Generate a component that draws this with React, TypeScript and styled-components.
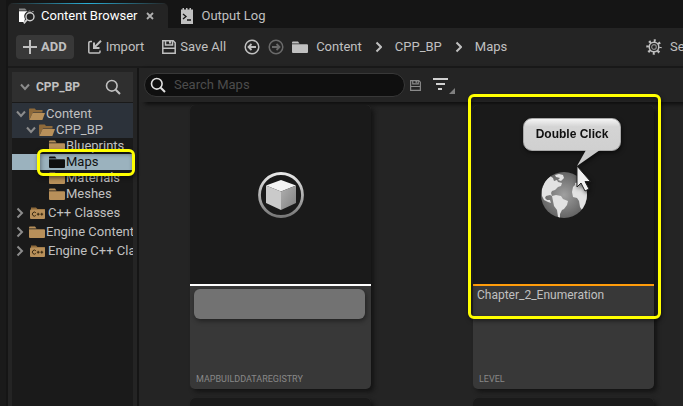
import React from "react";
import styled, { createGlobalStyle } from "styled-components";

const GlobalStyle = createGlobalStyle`
  * { box-sizing: border-box; }
  body { margin: 0; background: #1a1a1a; }
  button, input { font: inherit; color: inherit; border: 0; padding: 0; margin: 0; background: none; }
  button { cursor: pointer; text-align: left; }
  ul { list-style: none; margin: 0; padding: 0; }
  svg { display: block; flex: none; }
`;

const Shell = styled.div`
  display: flex;
  flex-direction: column;
  height: 100vh;
  overflow: hidden;
  border-left: 6px solid #1a1a1a;
  padding-left: 2px;
  background: #151515;
  color: #c0c0c0;
  font: 13px/16px Roboto, sans-serif;
`;

const TabBar = styled.div`
  display: flex;
  flex: none;
  align-items: flex-end;
  height: 28px;
`;

const Tab = styled.button<{ $active?: boolean }>`
  position: relative;
  display: flex;
  align-items: center;
  gap: ${(p) => (p.$active ? 6 : 8)}px;
  height: 25px;
  padding: 0 ${(p) => (p.$active ? 14 : 13)}px 0 ${(p) => (p.$active ? 11 : 13)}px;
  border-radius: 5px 5px 0 0;
  overflow: hidden;
  white-space: nowrap;
  color: ${(p) => (p.$active ? "#ffffff" : "#c0c0c0")};
  background: ${(p) =>
    p.$active
      ? "linear-gradient(90deg, #242424, #2aaed6 50%, #242424) top / 100% 1px no-repeat, #242424"
      : "transparent"};
`;

const CloseMark = styled.span`
  margin-left: 3px;
  color: #b0b0b0;
`;

const Toolbar = styled.div`
  display: flex;
  flex: none;
  align-items: center;
  height: 40px;
  padding: 0 0 0 8px;
  border-bottom: 2px solid #1a1a1a;
  background: #242424;
  white-space: nowrap;
`;

const ToolButton = styled.button<{ $filled?: boolean }>`
  display: flex;
  flex: none;
  align-items: center;
  gap: 4px;
  height: 24px;
  margin-right: ${(p) => (p.$filled ? 14 : 18)}px;
  padding: ${(p) => (p.$filled ? "0 7px" : "0")};
  border-radius: 4px;
  background: ${(p) => (p.$filled ? "#383838" : "transparent")};
  font-weight: ${(p) => (p.$filled ? 700 : 400)};
`;

const NavButtons = styled.div`
  display: flex;
  gap: 8px;
  margin-right: 8px;
`;

const Breadcrumbs = styled.nav`
  display: flex;
  align-items: center;
  gap: 13px;
`;

const Crumb = styled.a`
  display: flex;
  align-items: center;
  gap: 8px;
  color: inherit;
  text-decoration: none;
`;

const SettingsButton = styled.button`
  display: flex;
  align-items: center;
  gap: 8px;
  width: 37px;
  margin-left: auto;
  overflow: hidden;
`;

const Body = styled.div`
  display: flex;
  flex: 1;
  min-height: 0;
`;

const Sidebar = styled.aside`
  display: flex;
  flex-direction: column;
  flex: none;
  width: 131px;
  padding: 4px 4px 0;
  border-right: 2px solid #151515;
  background: #242424;
`;

const SidebarHeader = styled.div`
  display: flex;
  flex: none;
  align-items: center;
  gap: 6px;
  height: 30px;
  padding: 0 12px 0 8px;
  background: #2f2f2f;
  font-weight: 700;
  font-size: 12px;
`;

const HeaderSearch = styled.button`
  margin-left: auto;
`;

const Tree = styled.ul`
  flex: 1;
  padding-top: 1px !important;
  background: #1a1a1a;
`;

const TreeItem = styled.li`
  position: relative;
`;

const TreeRow = styled.button<{ $depth: number; $open?: boolean; $selected?: boolean }>`
  display: flex;
  align-items: center;
  width: 100%;
  height: ${(p) => (p.$depth === 0 ? 19 : 16)}px;
  padding-top: ${(p) => (p.$depth === 0 ? 2 : 0)}px;
  padding-left: ${(p) => 4 + p.$depth * 10}px;
  overflow: hidden;
  white-space: nowrap;
  color: ${(p) => (p.$selected ? "#101010" : "#c0c0c0")};
  background: ${(p) => (p.$selected ? "#9bb2be" : p.$open ? "#2c323a" : "transparent")};
`;

const ArrowSlot = styled.span`
  flex: none;
  width: 13px;
`;

const TreeLabel = styled.span<{ $wide?: boolean }>`
  margin-left: ${(p) => (p.$wide ? 3 : 1)}px;
`;

const Highlight = styled.div<{ $inset: string }>`
  position: absolute;
  z-index: 3;
  inset: ${(p) => p.$inset};
  border: 3px solid #ffff00;
  border-radius: 6px;
  box-shadow: 1px 2px 4px #00000080, inset 1px 2px 4px #00000060;
  pointer-events: none;
`;

const Main = styled.main`
  display: flex;
  flex-direction: column;
  flex: 1;
  min-width: 0;
  background: #242424;
`;

const FilterBar = styled.div`
  display: flex;
  flex: none;
  align-items: center;
  height: 34px;
  padding-left: 5px;
  box-shadow: 6px 2px 4px #0c0c0c;
`;

const SearchField = styled.label`
  display: flex;
  flex: 0 1 261px;
  align-items: center;
  gap: 8px;
  height: 24px;
  padding: 0 12px 0 5px;
  border: 1px solid #383838;
  border-radius: 12px;
  background: #0f0f0f;
`;

const SearchInput = styled.input`
  flex: 1;
  min-width: 0;
  height: 20px;
  margin-bottom: 2px !important;
  outline: 0;
  &::placeholder { color: #4c4c4c; opacity: 1; }
`;

const SaveSearch = styled.button`
  margin: 0 12px 0 5px !important;
`;

const AssetGrid = styled.div`
  display: grid;
  grid-template-columns: repeat(2, 181px);
  gap: 9px 102px;
  padding: 3px 51px 0;
`;

const Card = styled.article`
  position: relative;
  display: flex;
  flex-direction: column;
  height: 284px;
  border-radius: 5px;
  background: #383838;
  box-shadow: 3px 3px 4px #141414;
`;

const Thumbnail = styled.div<{ $accent: string }>`
  display: flex;
  align-items: center;
  justify-content: center;
  height: 181px;
  border-bottom: 2px solid ${(p) => p.$accent};
  border-radius: 5px 5px 0 0;
  background: #1a1a1a;
`;

const AssetName = styled.div`
  padding: 1px 4px 0;
  font-size: 12px;
`;

const BlankName = styled.div`
  height: 30px;
  margin: 3px 6px 0 4px;
  border-radius: 6px;
  background: #727272;
  box-shadow: 1px 2px 5px #00000070;
`;

const AssetType = styled.div`
  margin-top: auto;
  padding: 0 6px 4px;
  color: #888888;
  font-size: 9px;
  line-height: 12px;
`;

const Callout = styled.div`
  position: absolute;
  z-index: 4;
  top: 13px;
  left: 50px;
  width: 98px;
  height: 33px;
  border: 1px solid #a8a8a8;
  border-radius: 9px;
  background: linear-gradient(#f4f4f4, #d4d4d4 25%, #d0d0d0);
  color: #101010;
  font: bold 12px/30px "Liberation Sans", sans-serif;
  text-align: center;
  filter: drop-shadow(1px 2px 2px #00000090);
`;

const CalloutPointer = styled.svg`
  position: absolute;
  top: 31px;
  left: 51px;
`;

const Chevron = ({ down, size = 10, color = "#8c8c8c" }: { down?: boolean; size?: number; color?: string }) => (
  <svg width={size} height="12" viewBox={`0 0 ${size} 12`} fill="none" stroke={color} strokeWidth="2">
    {down ? <path d="M1 3.500 5 8l4-4.500" /> : <path d="m1.500 1.500 4.500 4.500-4.500 4.500" />}
  </svg>
);

const Folder = ({ color }: { color: string }) => (
  <svg width="16" height="12" viewBox="0 0 16 12" fill={color}>
    <path d="M0 1.500Q0 .5 1 .5h5L7.500 2.500H0zM0 3.300h15q1 0 1 1V11q0 1-1 1H1q-1 0-1-1z" />
  </svg>
);

const OpenFolder = () => (
  <svg width="16" height="12" viewBox="0 0 16 12">
    <path d="M0 12V1.200Q0 .5.8.5h5L7 2h6.500v2.500H4z" fill="#8f6a3a" />
    <path d="M3.600 5H16l-2.600 7H.3z" fill="#b8905a" />
  </svg>
);

const CodeFolder = () => (
  <svg width="16" height="12" viewBox="0 0 16 12">
    <path d="M2 3V.5h5L8.500 2H16v2H2z" fill="#8f6a3a" />
    <rect x="1" y="2.500" width="15" height="9.500" rx="1" fill="#b8905a" />
    <path d="M6.800 5.700a2 2 0 1 0 0 2.800M7.800 7.200h2.800M9.200 5.800v2.800M11.400 7.200h2.800M12.800 5.800v2.800" fill="none" stroke="#35260f" />
  </svg>
);

const SearchIcon = ({ color = "#c0c0c0" }: { color?: string }) => (
  <svg width="16" height="16" viewBox="0 0 16 16" fill="none" stroke={color} strokeWidth="1.600">
    <circle cx="6.800" cy="6.800" r="5.300" />
    <path d="m10.700 10.700 4.300 4.300" strokeWidth="2" />
  </svg>
);

const FloppyIcon = ({ size, color }: { size: number; color: string }) => (
  <svg width={size} height={size} viewBox="0 0 14 14" fill="none" stroke={color} strokeWidth="1.500">
    <path d="M.8.800h10.400l2 2v10.400H.8z" />
    <path d="M3.500.800v4.200h7V.800M1 8.300h12" />
    <path d="M8 1v2.500" strokeWidth="2" />
  </svg>
);

const BrowserIcon = () => (
  <svg width="16" height="16" viewBox="0 0 16 16" fill="none">
    <path d="M0 .5h6l2 2H0z" fill="#8a8a8a" />
    <path d="M0 3.300h14.500v1A5.500 5.500 0 0 0 6 11l-1 3H0z" fill="#fff" />
    <circle cx="11" cy="8.700" r="4" fill="#242424" stroke="#d0d0d0" strokeWidth="1.400" />
    <path d="m8 11.700-3.200 3.600" stroke="#d0d0d0" strokeWidth="1.800" />
  </svg>
);

const LogIcon = () => (
  <svg width="12" height="16" viewBox="0 0 12 16">
    <path d="M0 1.500h1.500V0H3v1.500h2V0h1.500v1.500h2V0H10v1.500h2V16H0z" fill="#c0c0c0" />
    <path d="m2 6 3 2.500L2 11M6 12h4" fill="none" stroke="#151515" strokeWidth="1.300" />
  </svg>
);

const PlusIcon = () => (
  <svg width="14" height="14" viewBox="0 0 14 14" stroke="#c0c0c0" strokeWidth="2">
    <path d="M7 0v14M0 7h14" />
  </svg>
);

const ImportIcon = () => (
  <svg width="14" height="14" viewBox="0 0 14 14" fill="none" stroke="#c0c0c0" strokeWidth="1.500">
    <path d="M4 1.500H2.500Q.8 1.500.8 3v9q0 1 1 1H11q1 0 1-1v-1.500" />
    <path d="M13 .8 6.500 7.300M6 2.500V8h5.500" strokeWidth="2" />
  </svg>
);

const HistoryIcon = ({ forward }: { forward?: boolean }) => (
  <svg width="16" height="16" viewBox="0 0 16 16" fill="none" stroke={forward ? "#6a6a6a" : "#c0c0c0"} strokeWidth="1.500">
    <circle cx="8" cy="8" r="6.800" />
    <path d={forward ? "M4 8h7M8.500 5l3 3-3 3" : "M12 8H5M7.500 5l-3 3 3 3"} strokeWidth="1.800" />
  </svg>
);

const GearIcon = () => (
  <svg width="16" height="16" viewBox="0 0 16 16" fill="none" stroke="#c0c0c0">
    <circle cx="8" cy="8" r="6.400" strokeWidth="2.600" strokeDasharray="2 3.026" strokeDashoffset="1" />
    <circle cx="8" cy="8" r="4.800" strokeWidth="1.500" />
    <circle cx="8" cy="8" r="2.300" stroke="#8a8a8a" strokeWidth="1.200" />
  </svg>
);

const FilterIcon = () => (
  <svg width="22" height="18" viewBox="0 0 22 18">
    <path d="M0 2h15v2H0zM3 7h9v2H3zM5 12h4v2H5z" fill="#d0d0d0" />
    <path d="M22 12v6h-6z" fill="#808080" />
  </svg>
);

const CubeIcon = () => (
  <svg width="46" height="46" viewBox="0 0 46 46">
    <defs>
      <linearGradient id="ring" x2="0" y2="1">
        <stop stopColor="#e8e8e8" />
        <stop offset="1" stopColor="#787878" />
      </linearGradient>
      <linearGradient id="side" x2="1" y2="1">
        <stop stopColor="#b0b0b0" />
        <stop offset="1" stopColor="#808080" />
      </linearGradient>
    </defs>
    <circle cx="23" cy="23" r="21.500" fill="none" stroke="url(#ring)" strokeWidth="2.800" />
    <path d="m23 8 15 5.500L23 19.500 8 13.500z" fill="#f4f4f4" />
    <path d="m8 13.500 15 6V38L8 31z" fill="#cacaca" />
    <path d="m38 13.500-15 6V38l15-7z" fill="url(#side)" />
  </svg>
);

const GlobeIcon = () => (
  <svg width="46" height="46" viewBox="0 0 46 46">
    <defs>
      <radialGradient id="sea">
        <stop stopColor="#a0a0a0" />
        <stop offset="1" stopColor="#646464" />
      </radialGradient>
      <clipPath id="disc"><circle cx="23" cy="23" r="23" /></clipPath>
    </defs>
    <circle cx="23" cy="23" r="23" fill="url(#sea)" />
    <g fill="#e2e2e2" clipPath="url(#disc)">
      <path d="M1 17 4 9l5-5 3 2 1 3 3-1 1 2 4 1-1 3-3 1-3 3-3 1-1 2 1 3-2-1-4 1-1 2 2 2 3 0 1 3-3-1-4-2-2-4z" />
      <path d="m14 3 4-1 4 1 1 3-3 3-3-1 2-2-4-1z" />
      <path d="m11 24 4-1 5 1 2 3 5 2-1 4-3 4-2 1-2 4v4l-2-1-1-7-3-4-1-5z" />
      <path d="m31 20 1-5 2-2v-2l5-1 7 6v17l-5 5-2-3-1-6-2-3-4-1z" />
    </g>
  </svg>
);

type Node = { label: string; depth: number; kind: "open" | "folder" | "code"; selected?: boolean };

const nodes: Node[] = [
  { label: "Content", depth: 0, kind: "open" },
  { label: "CPP_BP", depth: 1, kind: "open" },
  { label: "Blueprints", depth: 2, kind: "folder" },
  { label: "Maps", depth: 2, kind: "folder", selected: true },
  { label: "Materials", depth: 2, kind: "folder" },
  { label: "Meshes", depth: 2, kind: "folder" },
  { label: "C++ Classes", depth: 0, kind: "code" },
  { label: "Engine Content", depth: 0, kind: "folder" },
  { label: "Engine C++ Classes", depth: 0, kind: "code" },
];

const TreeNode = ({ node }: { node: Node }) => (
  <TreeItem>
    <TreeRow $depth={node.depth} $open={node.kind === "open"} $selected={node.selected}>
      <ArrowSlot>{node.depth < 2 && <Chevron down={node.kind === "open"} />}</ArrowSlot>
      {node.kind === "open" && <OpenFolder />}
      {node.kind === "folder" && <Folder color={node.selected ? "#101010" : "#b8905a"} />}
      {node.kind === "code" && <CodeFolder />}
      <TreeLabel $wide={node.kind === "code"}>{node.label}</TreeLabel>
    </TreeRow>
    {node.selected && <Highlight $inset="-5px -2px -6px 25px" />}
  </TreeItem>
);

export default function App() {
  return (
    <>
      <GlobalStyle />
      <Shell>
        <TabBar>
          <Tab $active>
            <BrowserIcon />
            Content Browser
            <CloseMark>
              <svg width="8" height="8" viewBox="0 0 8 8" stroke="currentColor" strokeWidth="1.800">
                <path d="m1 1 6 6M7 1 1 7" />
              </svg>
            </CloseMark>
          </Tab>
          <Tab>
            <LogIcon />
            Output Log
          </Tab>
        </TabBar>
        <Toolbar>
          <ToolButton $filled><PlusIcon />ADD</ToolButton>
          <ToolButton><ImportIcon />Import</ToolButton>
          <ToolButton><FloppyIcon size={14} color="#c0c0c0" />Save All</ToolButton>
          <NavButtons>
            <button aria-label="Back"><HistoryIcon /></button>
            <button aria-label="Forward"><HistoryIcon forward /></button>
          </NavButtons>
          <Breadcrumbs>
            <Crumb href="#content"><Folder color="#c0c0c0" />Content</Crumb>
            <Chevron size={7} color="#c0c0c0" />
            <Crumb href="#cpp-bp">CPP_BP</Crumb>
            <Chevron size={7} color="#c0c0c0" />
            <Crumb href="#maps">Maps</Crumb>
          </Breadcrumbs>
          <SettingsButton><GearIcon />Settings</SettingsButton>
        </Toolbar>
        <Body>
          <Sidebar>
            <SidebarHeader>
              <Chevron down />
              CPP_BP
              <HeaderSearch aria-label="Search folders"><SearchIcon /></HeaderSearch>
            </SidebarHeader>
            <Tree>
              {nodes.map((node) => <TreeNode key={node.label} node={node} />)}
            </Tree>
          </Sidebar>
          <Main>
            <FilterBar>
              <SearchField>
                <SearchIcon color="#e0e0e0" />
                <SearchInput type="text" placeholder="Search Maps" aria-label="Search Maps" />
              </SearchField>
              <SaveSearch aria-label="Save search"><FloppyIcon size={11} color="#8a8a8a" /></SaveSearch>
              <button aria-label="Filter"><FilterIcon /></button>
            </FilterBar>
            <AssetGrid>
              <Card>
                <Thumbnail $accent="#ffffff"><CubeIcon /></Thumbnail>
                <BlankName />
                <AssetType>MAPBUILDDATAREGISTRY</AssetType>
              </Card>
              <Card>
                <Thumbnail $accent="#ff9c0b"><GlobeIcon /></Thumbnail>
                <AssetName>Chapter_2_Enumeration</AssetName>
                <AssetType>LEVEL</AssetType>
                <Highlight $inset="-11px -7px 70px -5px" />
                <Callout>
                  Double Click
                  <CalloutPointer width="26" height="44" viewBox="0 0 26 44">
                    <path d="M11 0h14L2 16z" fill="#cacaca" />
                    <path d="M2 16v21l4-4 4 8 4-2-4-7.500h5.500z" fill="#f0f0f0" stroke="#202020" />
                  </CalloutPointer>
                </Callout>
              </Card>
              <Card><Thumbnail $accent="#ffffff" /></Card>
              <Card><Thumbnail $accent="#ffffff" /></Card>
            </AssetGrid>
          </Main>
        </Body>
      </Shell>
    </>
  );
}
